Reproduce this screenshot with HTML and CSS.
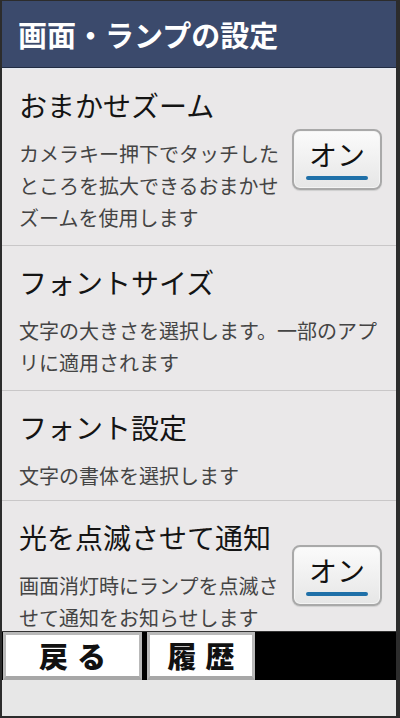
FILE: index.html
```html
<!DOCTYPE html>
<html lang="ja">
<head>
<meta charset="utf-8">
<link rel="stylesheet" href="styles.css">
</head>
<body>
<div class="screen">
  <header class="header">画面・ランプの設定</header>
  <div class="list">
    <div class="row">
      <div class="text">
        <div class="title">おまかせズーム</div>
        <div class="desc">カメラキー押下でタッチしたところを拡大できるおまかせズームを使用します</div>
      </div>
      <div class="toggle"><span class="toggle-label">オン</span><span class="toggle-bar"></span></div>
    </div>
    <div class="row">
      <div class="text">
        <div class="title">フォントサイズ</div>
        <div class="desc">文字の大きさを選択します。一部のアプリに適用されます</div>
      </div>
    </div>
    <div class="row row-short">
      <div class="text">
        <div class="title">フォント設定</div>
        <div class="desc">文字の書体を選択します</div>
      </div>
    </div>
    <div class="row">
      <div class="text">
        <div class="title">光を点滅させて通知</div>
        <div class="desc">画面消灯時にランプを点滅させて通知をお知らせします</div>
      </div>
      <div class="toggle"><span class="toggle-label">オン</span><span class="toggle-bar"></span></div>
    </div>
  </div>
  <nav class="softkeys">
    <div class="softkey softkey-back">戻る</div>
    <div class="softkey softkey-history">履歴</div>
  </nav>
  <div class="footer"></div>
</div>
</body>
</html>
```

FILE: styles.css
```css
html, body {
  margin: 0;
  padding: 0;
}
body {
  background: #2c2c2c;
  width: 400px;
  height: 718px;
  overflow: hidden;
  font-family: "Noto Sans CJK JP", "Noto Sans", sans-serif;
}
.screen {
  margin: 1px 0 0 2px;
  width: 394px;
  height: 715px;
  display: flex;
  flex-direction: column;
  background: #eae8e9;
}
.header {
  height: 67px;
  box-sizing: border-box;
  border-bottom: 1px solid #222c42;
  background: #3b4a6c;
  color: #ffffff;
  font-weight: 700;
  font-size: 29px;
  line-height: 66px;
  padding-left: 16px;
  letter-spacing: 0;
}
.list {
  flex: 1;
  overflow: hidden;
  border-top: 1px solid #e4eaf2;
}
.row {
  display: flex;
  align-items: center;
  gap: 12px;
  padding: 16px 14px 11px 17px;
  border-bottom: 1px solid #c9c7c8;
}
.row-short {
  padding-bottom: 8px;
}
.text {
  flex: 1;
  min-width: 0;
}
.title {
  font-size: 28px;
  line-height: 40px;
  color: #141414;
  margin-bottom: 13px;
}
.desc {
  font-size: 20px;
  line-height: 32px;
  color: #444444;
}
.toggle {
  flex: none;
  width: 90px;
  height: 61px;
  box-sizing: border-box;
  border: 2px solid #a9a9a9;
  border-radius: 8px;
  background: linear-gradient(#fbfbfb, #e6e6e6);
  box-shadow: inset 0 0 0 1px #f4f4f4, 0 1px 1px #cfcfcf;
  display: flex;
  flex-direction: column;
  align-items: center;
  padding-top: 6px;
}
.toggle-label {
  font-size: 28px;
  line-height: 34px;
  color: #111111;
}
.toggle-bar {
  margin-top: 5px;
  width: 62px;
  height: 4px;
  border-radius: 2px;
  background: #1f70a8;
}
.softkeys {
  height: 49px;
  box-sizing: border-box;
  border-top: 1px solid #333333;
  background: #000000;
  display: flex;
  padding-left: 1px;
}
.softkey {
  height: 48px;
  box-sizing: border-box;
  background: #ffffff;
  border: 3px solid #b9b9b9;
  border-bottom-width: 4px;
  border-bottom-color: #a7a7a7;
  font-weight: 900;
  font-size: 29px;
  line-height: 40px;
  letter-spacing: 9px;
  color: #111111;
  text-align: center;
  padding-left: 9px;
}
.softkey-back {
  width: 139px;
  margin-right: 5px;
}
.softkey-history {
  width: 108px;
}
.footer {
  height: 36px;
  background: #e7e7e7;
}
```
